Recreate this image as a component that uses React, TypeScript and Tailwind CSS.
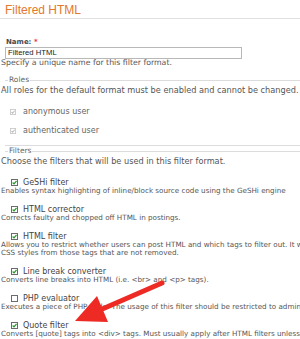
import React from 'react';

const filters = [
  { name: 'GeSHi filter', checked: true, desc: ['Enables syntax highlighting of inline/block source code using the GeSHi engine'] },
  { name: 'HTML corrector', checked: true, desc: ['Corrects faulty and chopped off HTML in postings.'] },
  {
    name: 'HTML filter',
    checked: true,
    desc: [
      'Allows you to restrict whether users can post HTML and which tags to filter out. It will',
      'CSS styles from those tags that are not removed.',
    ],
  },
  { name: 'Line break converter', checked: true, desc: ['Converts line breaks into HTML (i.e. <br> and <p> tags).'] },
  { name: 'PHP evaluator', checked: false, desc: ['Executes a piece of PHP code. The usage of this filter should be restricted to administ'] },
  { name: 'Quote filter', checked: true, desc: ['Converts [quote] tags into <div> tags. Must usually apply after HTML filters unless an'] },
];

function Check({ checked, disabled }: { checked: boolean; disabled?: boolean }) {
  const size = disabled ? 6 : 7;
  return (
    <svg width={size} height={size} viewBox="0 0 7 7" className="shrink-0">
      <rect x="0.5" y="0.5" width="6" height="6" fill="#fff" stroke={disabled ? '#c8c8c8' : '#6b6b6b'} />
      {checked && (
        <path d="M1.6 3.5 L3 4.9 L5.5 2" fill="none" stroke={disabled ? '#bdbdbd' : '#2c9a2c'} strokeWidth="1.2" />
      )}
    </svg>
  );
}

export default function App() {
  return (
    <div className="relative w-[300px] h-[339px] overflow-hidden bg-white text-[#4a4a4a] font-['DejaVu_Sans',sans-serif]">
      {/* Page title */}
      <div className="pl-[5px] pt-[3px] pb-[1px] border-b border-[#e0e0e0] font-['Liberation_Sans',Arial,sans-serif] text-[12px] leading-[14px] text-[#e4782d]">
        Filtered HTML
      </div>

      {/* Name field */}
      <div className="mt-[19px] pl-[6px] text-[7px] leading-[9px] font-bold text-[#494949]">
        Name: <span className="text-[#e33]">*</span>
      </div>
      <div className="ml-[5px] w-[237px] h-[12px] border border-[#b8b8b8] pl-[2px] font-['Liberation_Sans',Arial,sans-serif] text-[7.7px] leading-[10px] text-[#222]">
        Filtered HTML
      </div>
      <div className="pl-[1px] text-[7.8px] leading-[8px] text-[#555] whitespace-nowrap">Specify a unique name for this filter format.</div>

      {/* Roles */}
      <fieldset className="mt-[9px] ml-[5px] border-t border-b border-[#dcdcdc] pb-[9px]">
        <legend className="ml-[3px] px-[1px] text-[7.5px] leading-[8px] text-[#666]">Roles</legend>
        <div className="-ml-[4px]">
          <div className="mt-[2px] text-[8.2px] leading-[8px] text-[#555] whitespace-nowrap">
            All roles for the default format must be enabled and cannot be changed.
          </div>
          <div className="mt-[13px] pl-[9px] flex items-center gap-[7px] h-[10px] text-[8px] text-[#666]">
            <Check checked disabled />
            <span>anonymous user</span>
          </div>
          <div className="mt-[9px] pl-[9px] flex items-center gap-[7px] h-[10px] text-[8px] text-[#666]">
            <Check checked disabled />
            <span>authenticated user</span>
          </div>
        </div>
      </fieldset>

      {/* Filters */}
      <fieldset className="mt-[1px] ml-[5px] border-t border-[#dcdcdc]">
        <legend className="ml-[3px] px-[1px] text-[7.5px] leading-[8px] text-[#666]">Filters</legend>
        <div className="-ml-[4px]">
          <div className="mt-[2px] mb-[13px] text-[8.2px] leading-[8px] text-[#555] whitespace-nowrap">
            Choose the filters that will be used in this filter format.
          </div>
          <div className="flex flex-col gap-[10px]">
            {filters.map((f) => (
              <div key={f.name}>
                <div className="pl-[10px] flex items-center gap-[5px] h-[9px] text-[8px] text-[#444]">
                  <Check checked={f.checked} />
                  <span>{f.name}</span>
                </div>
                {f.desc.map((line) => (
                  <div key={line} className="text-[7.2px] leading-[8px] text-[#555] whitespace-nowrap">
                    {line}
                  </div>
                ))}
              </div>
            ))}
          </div>
        </div>
      </fieldset>

      {/* Red annotation arrow */}
      <svg className="absolute left-0 top-0 pointer-events-none" width="300" height="339" viewBox="0 0 300 339">
        <line x1="162" y1="283" x2="100" y2="310" stroke="#ee2a24" strokeWidth="5" strokeLinecap="round" />
        <polygon points="75,321 97,296 108,322" fill="#ee2a24" />
      </svg>
    </div>
  );
}
